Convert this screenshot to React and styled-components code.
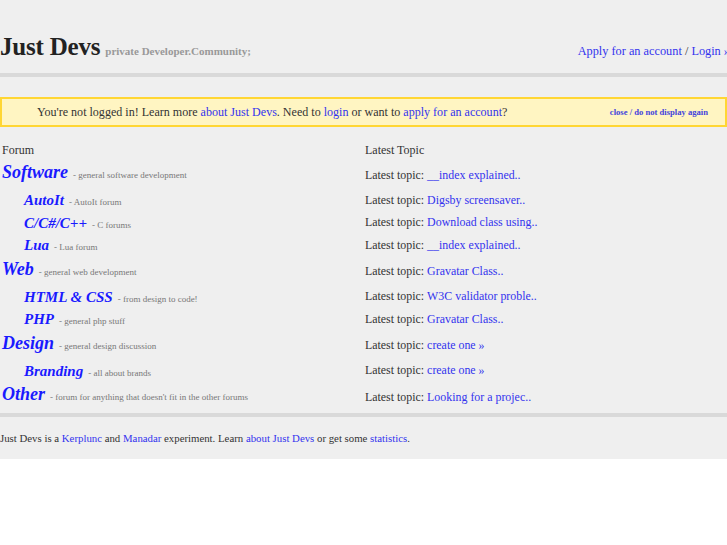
import React from "react";
import styled, { createGlobalStyle } from "styled-components";

const Global = createGlobalStyle`
  html, body { margin: 0; padding: 0; background: #fff; }
  body { font-family: "Liberation Serif", "Times New Roman", serif; color: #333; }
  a { text-decoration: none; color: #3333ee; }
`;

const Page = styled.div`
  background: #efefef;
  width: 100%;
`;

const Header = styled.header`
  display: flex;
  align-items: baseline;
  justify-content: space-between;
  height: 73px;
  padding-top: 33px;
  box-sizing: border-box;
`;

const Brand = styled.div`
  display: flex;
  align-items: baseline;
  gap: 5px;
`;

const Logo = styled.h1`
  margin: 0;
  font-size: 25px;
  line-height: 28px;
  font-weight: bold;
  color: #222;
  letter-spacing: -0.2px;
`;

const Tagline = styled.span`
  font-size: 11px;
  font-weight: bold;
  color: #999;
`;

const TopLinks = styled.div`
  font-size: 12.3px;
  color: #333;
  white-space: nowrap;
  margin-right: -3px;
`;

const Rule = styled.div`
  height: 4px;
  background: #d9d9d9;
`;

const Notice = styled.div`
  margin-top: 20px;
  display: flex;
  align-items: center;
  justify-content: space-between;
  height: 30px;
  box-sizing: border-box;
  background: #fff5c2;
  border: 2px solid #ffd633;
  padding: 0 17px 0 35px;
  font-size: 12.05px;
  color: #333;
`;

const Close = styled.a`
  font-size: 8.6px;
  font-weight: bold;
  color: #4444dd;
`;

const Forums = styled.div`
  margin-top: 13px;
  display: grid;
  grid-template-columns: 363px 1fr;
  padding-bottom: 2px;
`;

const HeadCell = styled.div`
  font-size: 12px;
  color: #333;
  height: 20px;
  line-height: 20px;
  padding-left: 2px;
`;

const NameCell = styled.div`
  height: ${(p) => (p.$cat ? 29 : 22.5)}px;
  padding-left: ${(p) => (p.$cat ? 2 : 24)}px;
  padding-top: ${(p) => (p.$cat ? 1 : 0)}px;
  box-sizing: border-box;
  display: flex;
  align-items: baseline;
  white-space: nowrap;
`;

const ForumName = styled.a`
  font-weight: bold;
  font-style: italic;
  color: #1a1aff;
  font-size: ${(p) => (p.$cat ? 18 : 15)}px;
  line-height: ${(p) => (p.$cat ? 22 : 22.5)}px;
`;

const Desc = styled.span`
  font-size: 9px;
  color: #777;
  margin-left: 5px;
`;

const TopicCell = styled.div`
  height: ${(p) => (p.$cat ? 29 : 22.5)}px;
  display: flex;
  align-items: center;
  padding-left: 2px;
  padding-top: ${(p) => (p.$cat ? 1 : 0)}px;
  box-sizing: border-box;
  font-size: 11.9px;
  color: #333;
  white-space: nowrap;
`;

const TopicLink = styled.a`
  margin-left: 3px;
  color: #3333ee;
`;

const Footer = styled.footer`
  padding: 14px 0 14px;
  font-size: 10.8px;
  line-height: 14px;
  color: #333;
`;

const rows = [
  { cat: true, name: "Software", desc: "- general software development", topic: "__index explained.." },
  { name: "AutoIt", desc: "- AutoIt forum", topic: "Digsby screensaver.." },
  { name: "C/C#/C++", desc: "- C forums", topic: "Download class using.." },
  { name: "Lua", desc: "- Lua forum", topic: "__index explained.." },
  { cat: true, name: "Web", desc: "- general web development", topic: "Gravatar Class.." },
  { name: "HTML & CSS", desc: "- from design to code!", topic: "W3C validator proble.." },
  { name: "PHP", desc: "- general php stuff", topic: "Gravatar Class.." },
  { cat: true, name: "Design", desc: "- general design discussion", topic: "create one »" },
  { name: "Branding", desc: "- all about brands", topic: "create one »" },
  { cat: true, name: "Other", desc: "- forum for anything that doesn't fit in the other forums", topic: "Looking for a projec.." },
];

export default function App() {
  return (
    <>
      <Global />
      <Page>
        <Header>
          <Brand>
            <Logo>Just Devs</Logo>
            <Tagline>private Developer.Community;</Tagline>
          </Brand>
          <TopLinks>
            <a href="#">Apply for an account</a> / <a href="#">Login »</a>
          </TopLinks>
        </Header>
        <Rule />
        <Notice>
          <span>
            You're not logged in! Learn more <a href="#">about Just Devs</a>. Need to{" "}
            <a href="#">login</a> or want to <a href="#">apply for an account</a>?
          </span>
          <Close href="#">close / do not display again</Close>
        </Notice>
        <Forums>
          <HeadCell>Forum</HeadCell>
          <HeadCell>Latest Topic</HeadCell>
          {rows.map((r, i) => (
            <React.Fragment key={i}>
              <NameCell $cat={r.cat}>
                <ForumName href="#" $cat={r.cat}>{r.name}</ForumName>
                <Desc>{r.desc}</Desc>
              </NameCell>
              <TopicCell $cat={r.cat}>
                Latest topic:<TopicLink href="#">{r.topic}</TopicLink>
              </TopicCell>
            </React.Fragment>
          ))}
        </Forums>
        <Rule />
        <Footer>
          Just Devs is a <a href="#">Kerplunc</a> and <a href="#">Manadar</a> experiment. Learn{" "}
          <a href="#">about Just Devs</a> or get some <a href="#">statistics</a>.
        </Footer>
      </Page>
    </>
  );
}
